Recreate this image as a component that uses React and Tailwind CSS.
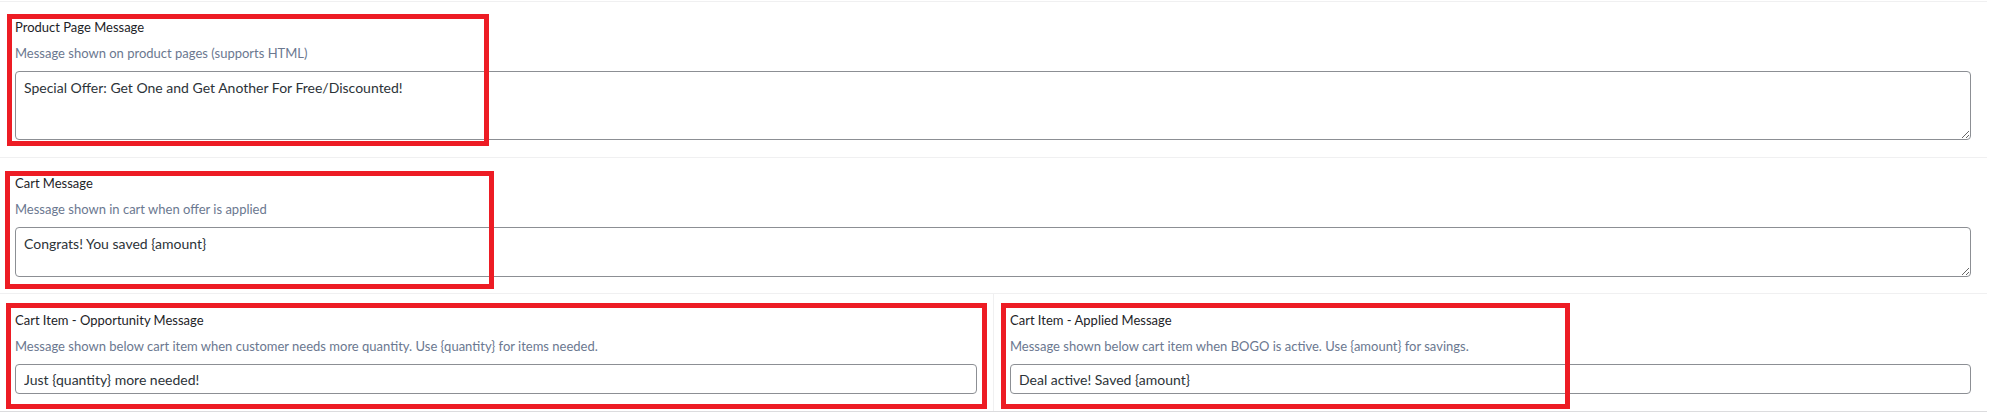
import React from 'react';

const labelCls = "block text-[13px] leading-[20px] text-[#1d2327]";
const descCls = "mt-[6px] text-[13px] leading-[20px] text-[#6b7890]";
const boxCls = "block w-full bg-white border border-[#8c8f94] rounded-[4px] px-[8px] text-[14px] leading-[20px] text-[#2c3338] outline-none";
const markCls = "absolute border-[5px] border-[#ed1c24] pointer-events-none";

function Field({ label, desc, children, className }) {
  return (
    <div className={className}>
      <label className={labelCls}>{label}</label>
      <p className={descCls}>{desc}</p>
      <div className="mt-[8px]">{children}</div>
    </div>
  );
}

export default function App() {
  return (
    <div className="relative w-[1990px] h-[412px] bg-white font-['Lato',sans-serif] pt-px">
      <div className="w-[1987px]">
        <Field
          className="border-t border-b border-[#f0f0f1] pl-[15px] pr-[16px] pt-[15px] pb-[17px]"
          label="Product Page Message"
          desc="Message shown on product pages (supports HTML)"
        >
          <textarea
            readOnly
            defaultValue="Special Offer: Get One and Get Another For Free/Discounted!"
            className={`${boxCls} h-[69px] py-[6px] resize`}
          />
        </Field>

        <Field
          className="border-b border-[#f0f0f1] pl-[15px] pr-[16px] pt-[15px] pb-[16px]"
          label="Cart Message"
          desc="Message shown in cart when offer is applied"
        >
          <textarea
            readOnly
            defaultValue="Congrats! You saved {amount}"
            className={`${boxCls} h-[50px] py-[6px] resize`}
          />
        </Field>

        <div className="flex border-b border-[#dcdcde]">
          <Field
            className="w-[994px] border-r border-[#f0f0f1] pl-[15px] pr-[16px] pt-[16px] pb-[17px]"
            label="Cart Item - Opportunity Message"
            desc="Message shown below cart item when customer needs more quantity. Use {quantity} for items needed."
          >
            <input readOnly defaultValue="Just {quantity} more needed!" className={`${boxCls} h-[30px]`} />
          </Field>
          <Field
            className="flex-1 px-[16px] pt-[16px] pb-[17px]"
            label="Cart Item - Applied Message"
            desc="Message shown below cart item when BOGO is active. Use {amount} for savings."
          >
            <input readOnly defaultValue="Deal active! Saved {amount}" className={`${boxCls} h-[30px]`} />
          </Field>
        </div>
      </div>

      {/* red annotation boxes drawn over the form */}
      <div className={`${markCls} left-[7px] top-[14px] w-[482px] h-[132px]`} />
      <div className={`${markCls} left-[5px] top-[171px] w-[489px] h-[118px]`} />
      <div className={`${markCls} left-[6px] top-[303px] w-[981px] h-[106px]`} />
      <div className={`${markCls} left-[1001px] top-[303px] w-[569px] h-[106px]`} />
    </div>
  );
}
